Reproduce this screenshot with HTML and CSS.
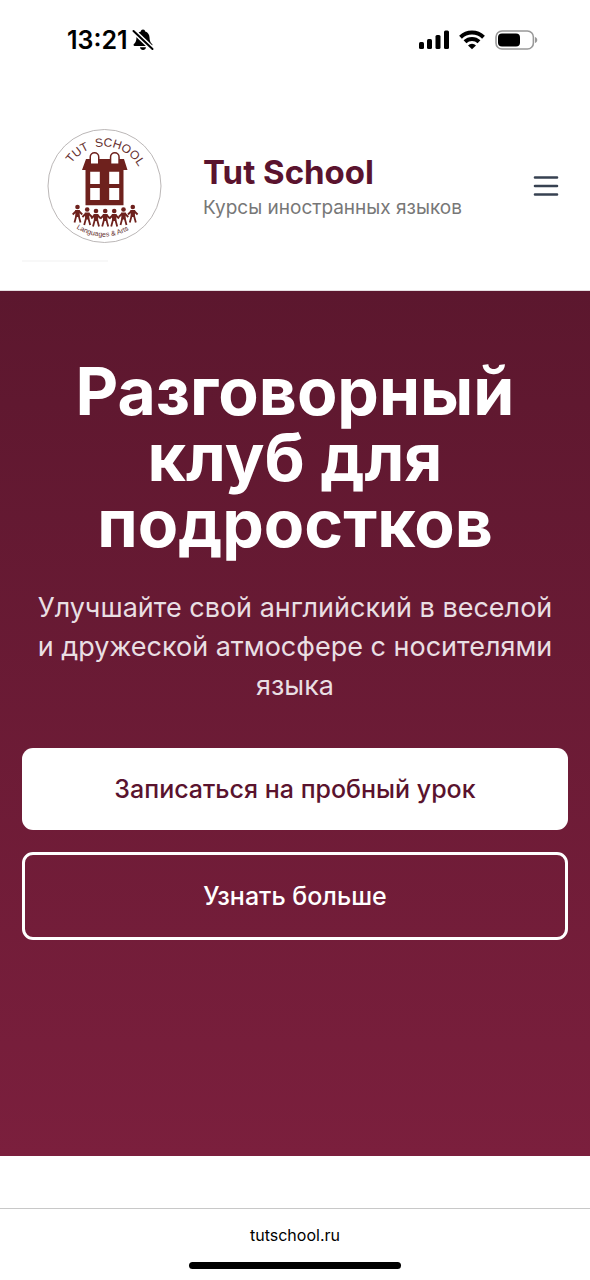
FILE: index.html
```html
<!DOCTYPE html>
<html lang="ru">
<head>
<meta charset="utf-8">
<meta name="viewport" content="width=device-width, initial-scale=1">
<title>Tut School</title>
<link rel="stylesheet" href="styles.css">
</head>
<body>
<div class="status-bar">
  <div class="status-time">
    <span>13:21</span>
    <svg class="icon-bell" viewBox="0 0 22 22" aria-hidden="true">
      <path d="M11 0.5c1.3 0 2 .8 2.2 1.9 2.700.8 4.200 3 4.300 5.800.1 3.800 1 5.300 2.600 6.800.6.700.4 2-.8 2H2.700c-1.200 0-1.400-1.300-.8-2C3.500 13.500 4.400 12 4.500 8.200 4.600 5.400 6.100 3.200 8.800 2.400 9 1.300 9.700.5 11 .5z"/>
      <path d="M8 18.300h6c-.3 1.700-1.400 2.700-3 2.700s-2.700-1-3-2.700z"/>
      <path class="slash-gap" d="M1 1.500 20.500 20"/>
      <path class="slash" d="M1.500 2 20.500 20"/>
    </svg>
  </div>
  <div class="status-icons">
    <svg class="icon-signal" viewBox="0 0 30 20" aria-hidden="true">
      <rect x="0" y="12" width="5" height="7" rx="1.500"/>
      <rect x="8" y="9" width="5" height="10" rx="1.500"/>
      <rect x="16.500" y="5" width="5" height="14" rx="1.500"/>
      <rect x="25" y="0.500" width="5" height="18.500" rx="1.500"/>
    </svg>
    <svg class="icon-wifi" viewBox="0 0 26 20" aria-hidden="true">
      <path class="wave" d="M1.500 7.200a16.500 16.500 0 0 1 23 0"/>
      <path class="wave" d="M6 11.800a10 10 0 0 1 14 0"/>
      <path d="M13 19.300 9 15.400a5.700 5.700 0 0 1 8 0z"/>
    </svg>
    <svg class="icon-battery" viewBox="0 0 43 20" aria-hidden="true">
      <rect class="shell" x="1" y="1" width="37.400" height="18" rx="6"/>
      <rect x="3" y="3.500" width="22" height="13" rx="4"/>
      <path class="tip" d="M40 7c3 .8 3 5.200 0 6z"/>
    </svg>
  </div>
</div>

<header class="site-header">
  <a class="brand" href="#">
    <svg class="logo" viewBox="-82 -82 164 164" role="img" aria-label="Tut School, Languages &amp; Arts">
      <defs>
        <path id="arc-top" d="M-39.500 0A39.500 39.500 0 0 1 39.500 0"/>
        <path id="arc-bottom" d="M-50.500 0A50.500 50.500 0 0 0 50.500 0"/>
        <g id="person">
          <circle cx="0" cy="0" r="2.300"/>
          <path class="limbs" d="M-4.800 7.500-1.800 4.500H1.800L4.800 7.500M-1 8-3 15.500M1 8 3 15.500"/>
          <path d="M-2.400 3H2.400L2 10H-2z"/>
        </g>
      </defs>
      <circle class="ring" cx="0.500" cy="0" r="56.500"/>
      <text class="logo-name"><textPath href="#arc-top" startOffset="28.500%">TUT</textPath></text>
      <text class="logo-name"><textPath href="#arc-top" startOffset="63.500%">SCHOOL</textPath></text>
      <path class="house" fill-rule="evenodd" d="M-18-27H-14.500V-29a5 5 0 0 1 10 0V-27H5.800V-29a5 5 0 0 1 10 0V-27H20L23.500-16H19.500V19.300H-18.500V-16H-22zM-13-22.500H-6V-29a3.500 3.500 0 0 0-7 0zM7.300-22.500H14.300V-29a3.500 3.500 0 0 0-7 0zM-13.800-14.300V-2H-4.200V-14.300zM5.200-14.300V-2H15.200V-14.300zM-13.800 2V14H-4.200V2zM5.200 2V14H15.200V2z"/>
      <g class="people">
        <use href="#person" x="-26.500" y="21"/>
        <use href="#person" x="-16.800" y="23.500"/>
        <use href="#person" x="-8" y="25"/>
        <use href="#person" x="1.200" y="25"/>
        <use href="#person" x="10.200" y="25"/>
        <use href="#person" x="19.500" y="23.500"/>
        <use href="#person" x="28.800" y="21"/>
      </g>
      <text class="logo-motto"><textPath href="#arc-bottom" startOffset="49%">Languages &amp; Arts</textPath></text>
      <path class="logo-rule" d="M-82 75H4"/>
    </svg>
    <span class="brand-text">
      <span class="brand-name">Tut School</span>
      <span class="brand-tagline">Курсы иностранных языков</span>
    </span>
  </a>
  <button class="menu-button" type="button" aria-label="Меню">
    <svg viewBox="0 0 32 32" aria-hidden="true"><path d="M5 7.500H27M5 16H27M5 24.500H27"/></svg>
  </button>
</header>

<main class="hero">
  <h1 class="hero-title">Разговорный клуб для подростков</h1>
  <p class="hero-lead">Улучшайте свой английский в веселой и дружеской атмосфере с носителями языка</p>
  <div class="hero-actions">
    <button class="button button-primary" type="button">Записаться на пробный урок</button>
    <button class="button button-outline" type="button">Узнать больше</button>
  </div>
</main>

<footer class="browser-bar">
  <span class="address">tutschool.ru</span>
  <span class="home-indicator"></span>
</footer>
</body>
</html>
```
FILE: styles.css
```css
*,
*::before,
*::after {
  box-sizing: border-box;
}

body {
  margin: 0;
  min-height: 100vh;
  display: flex;
  flex-direction: column;
  background: #fff;
  color: #000;
  font-family: Inter, "Liberation Sans", sans-serif;
}

svg {
  display: block;
}

.status-bar {
  display: flex;
  justify-content: space-between;
  align-items: center;
  height: 80px;
  padding: 0 52px 0 67px;
}

.status-time {
  display: flex;
  align-items: center;
  gap: 4px;
  font-size: 25px;
  font-weight: 600;
}

.status-icons {
  display: flex;
  align-items: center;
  gap: 10px;
}

.icon-bell {
  width: 22px;
  height: 22px;
}

.slash-gap,
.slash {
  fill: none;
  stroke: #fff;
  stroke-width: 5;
}

.slash {
  stroke: #000;
  stroke-width: 2;
  stroke-linecap: round;
}

.icon-signal {
  width: 30px;
  height: 20px;
}

.icon-wifi {
  width: 26px;
  height: 20px;
}

.wave {
  fill: none;
  stroke: #000;
  stroke-width: 4;
}

.icon-battery {
  width: 43px;
  height: 20px;
}

.shell {
  fill: none;
  stroke: #999;
  stroke-width: 1.6;
}

.tip {
  fill: #999;
}

.site-header {
  display: flex;
  justify-content: space-between;
  align-items: center;
  padding: 24px 28px 22px 22px;
  border-bottom: 1px solid #e5dde0;
}

.brand {
  display: flex;
  align-items: center;
  gap: 17px;
  color: inherit;
  text-decoration: none;
}

.logo {
  flex: none;
  width: 164px;
  height: 164px;
}

.ring {
  fill: none;
  stroke: #aaa4a4;
  stroke-width: 0.8;
}

.logo-rule {
  stroke: #f6f6f6;
  stroke-width: 1.5;
}

.logo-name,
.logo-motto {
  font-family: "Liberation Sans", Arial, sans-serif;
  text-anchor: middle;
  fill: #65302f;
}

.logo-name {
  font-size: 12px;
}

.logo-motto {
  font-size: 7px;
}

.house,
.people {
  fill: #6e211d;
}

.limbs {
  fill: none;
  stroke: #6e211d;
  stroke-width: 1.8;
}

.brand-text {
  display: flex;
  flex-direction: column;
}

.brand-name {
  color: #5a132e;
  font-size: 33px;
  font-weight: 700;
  line-height: 44px;
}

.brand-tagline {
  color: #777;
  font-size: 19px;
  line-height: 28px;
}

.menu-button {
  padding: 0;
  border: 0;
  background: none;
}

.menu-button svg {
  width: 32px;
  height: 32px;
  fill: none;
  stroke: #374151;
  stroke-width: 2.6;
  stroke-linecap: round;
}

.hero {
  padding: 67px 22px 216px;
  background: linear-gradient(#5c172e, #7b1f3d);
  color: #fff;
  text-align: center;
}

.hero-title {
  margin: 0 0 32px;
  font-size: 66px;
  font-weight: 700;
  line-height: 66px;
}

.hero-lead {
  margin: 0 0 43px;
  padding: 0 8px;
  color: #e9dfe3;
  font-size: 27px;
  line-height: 39px;
}

.hero-actions {
  display: flex;
  flex-direction: column;
  gap: 22px;
}

.button {
  padding: 22px;
  border: 0;
  border-radius: 11px;
  font-family: inherit;
  font-size: 25px;
  font-weight: 500;
  line-height: 38px;
}

.button-primary {
  background: #fff;
  color: #5a132e;
}

.button-outline {
  border: 3px solid #fff;
  background: none;
  color: #fff;
}

.browser-bar {
  display: flex;
  flex-direction: column;
  align-items: center;
  justify-content: space-between;
  height: 72px;
  margin-top: auto;
  padding: 15px 0 11px;
  border-top: 1px solid #c8c8c8;
}

.address {
  font-size: 16px;
  line-height: 22px;
}

.home-indicator {
  width: 36%;
  height: 7px;
  border-radius: 4px;
  background: #000;
}
```
